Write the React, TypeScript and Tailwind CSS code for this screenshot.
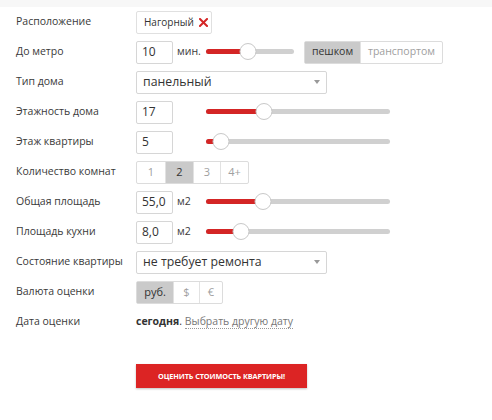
import React from "react";

const F = { fontFamily: '"Open Sans", "Liberation Sans", sans-serif' };

function Row({ label, children }: { label: string; children?: React.ReactNode }) {
  return (
    <div className="flex h-[30px] items-center">
      <div className="w-[136px] shrink-0 whitespace-nowrap pl-4 text-[10.5px] text-[#3a3a3a]">{label}</div>
      <div className="flex items-center">{children}</div>
    </div>
  );
}

function NumInput({ v }: { v: string }) {
  return (
    <div className="flex h-[23px] w-[37px] items-center rounded-[2px] border border-[#d6d6d6] bg-white pl-[5px] text-[12px] text-[#333]">
      {v}
    </div>
  );
}

function Slider({ width, pos }: { width: number; pos: number }) {
  return (
    <div className="relative h-[18px]" style={{ width }}>
      <div className="absolute left-0 right-0 top-[6px] h-[5px] rounded-full bg-[#d0d0d0]" />
      <div
        className="absolute left-0 top-[6px] h-[5px] rounded-full bg-[#d42525]"
        style={{ width: pos }}
      />
      <div
        className="absolute top-0 h-[17px] w-[17px] -translate-x-1/2 rounded-full border border-[#c8c8c8] bg-white"
        style={{ left: pos }}
      />
    </div>
  );
}

function Select({ v }: { v: string }) {
  return (
    <div className="flex h-[23px] w-[191px] items-center justify-between rounded-[2px] border border-[#d6d6d6] bg-white pl-[6px] pr-[6px] text-[12.3px] text-[#333]">
      <span>{v}</span>
      <span className="h-0 w-0 border-l-[3px] border-r-[3px] border-t-[4px] border-l-transparent border-r-transparent border-t-[#999]" />
    </div>
  );
}

function Seg({ items, active, widths, size }: { items: string[]; active: number; widths: number[]; size: string }) {
  return (
    <div className={"flex h-[23px] rounded-[2px] border border-[#dcdcdc] bg-white " + size}>
      {items.map((it, i) => (
        <div
          key={it}
          className={
            "flex items-center justify-center " +
            (i > 0 ? "border-l border-[#e2e2e2] " : "") +
            (i === active ? "bg-[#cacaca] text-[#333]" : "text-[#a0a0a0]")
          }
          style={{ width: widths[i] }}
        >
          {it}
        </div>
      ))}
    </div>
  );
}

export default function App() {
  return (
    <div className="h-[420px] w-[492px] bg-white" style={F}>
      <div className="h-[7px] bg-[#f7f7f7]" />
      <Row label="Расположение">
        <div className="flex h-[23px] w-[76px] items-center gap-[5px] rounded-[2px] border border-[#e0e0e0] bg-white pl-[7px] text-[10px] text-[#333]">
          <span>Нагорный</span>
          <svg width="9" height="9" viewBox="0 0 9 9" className="mt-[1px]">
            <path d="M1 1 L8 8 M8 1 L1 8" stroke="#d42525" strokeWidth="2" strokeLinecap="square" />
          </svg>
        </div>
      </Row>
      <Row label="До метро">
        <NumInput v="10" />
        <span className="ml-[4px] w-[29px] text-[10.5px] text-[#3a3a3a]">мин.</span>
        <Slider width={88} pos={42} />
        <div className="ml-[10px]">
          <Seg items={["пешком", "транспортом"]} active={0} widths={[55, 82]} size="text-[10.5px]" />
        </div>
      </Row>
      <Row label="Тип дома">
        <Select v="панельный" />
      </Row>
      <Row label="Этажность дома">
        <NumInput v="17" />
        <span className="ml-[4px] w-[29px]" />
        <Slider width={184} pos={58} />
      </Row>
      <Row label="Этаж квартиры">
        <NumInput v="5" />
        <span className="ml-[4px] w-[29px]" />
        <Slider width={184} pos={15} />
      </Row>
      <Row label="Количество комнат">
        <Seg items={["1", "2", "3", "4+"]} active={1} widths={[28, 28, 27, 28]} size="text-[11px]" />
      </Row>
      <Row label="Общая площадь">
        <NumInput v="55,0" />
        <span className="ml-[4px] w-[29px] text-[10.5px] text-[#3a3a3a]">м2</span>
        <Slider width={184} pos={57} />
      </Row>
      <Row label="Площадь кухни">
        <NumInput v="8,0" />
        <span className="ml-[4px] w-[29px] text-[10.5px] text-[#3a3a3a]">м2</span>
        <Slider width={184} pos={35} />
      </Row>
      <Row label="Состояние квартиры">
        <Select v="не требует ремонта" />
      </Row>
      <Row label="Валюта оценки">
        <Seg items={["руб.", "$", "€"]} active={0} widths={[36, 26, 23]} size="text-[11px]" />
      </Row>
      <Row label="Дата оценки">
        <span className="text-[10.5px] text-[#333]">
          <b className="font-bold">сегодня</b>.{" "}
          <span className="border-b border-dotted border-[#999] text-[#777]">Выбрать другую дату</span>
        </span>
      </Row>
      <div className="pl-[136px] pt-[27px]">
        <div className="flex h-[24px] w-[171px] items-center justify-center bg-[#dc2424] text-[7.3px] font-bold uppercase tracking-[-0.1px] text-white shadow-[0_1px_2px_rgba(0,0,0,0.25)]">
          Оценить стоимость квартиры!
        </div>
      </div>
    </div>
  );
}
